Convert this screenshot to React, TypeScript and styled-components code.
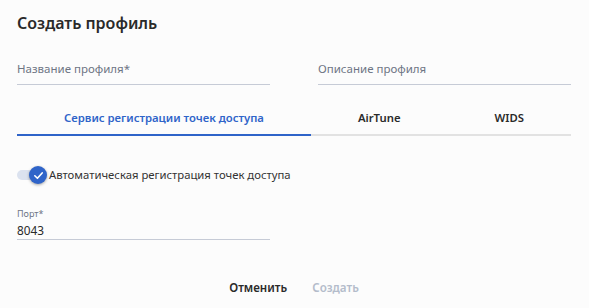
import React from 'react';
import styled, { createGlobalStyle } from 'styled-components';

const Global = createGlobalStyle`
  html, body { margin: 0; padding: 0; background: #fcfcfc; }
  body { font-family: "Noto Sans", "Open Sans", sans-serif; }
  * { box-sizing: border-box; }
`;

const Dialog = styled.div`
  width: 589px;
  height: 308px;
  padding: 11px 18px 0 17px;
  background: #fcfcfc;
`;

const Title = styled.h1`
  margin: 0;
  font-size: 16px;
  line-height: 24px;
  font-weight: 600;
  color: #2a2a2a;
`;

const FieldsRow = styled.div`
  display: grid;
  grid-template-columns: 253px 253px;
  column-gap: 48px;
  margin-top: 24px;
`;

const Field = styled.div<{ $width?: number }>`
  width: ${(p) => (p.$width ? `${p.$width}px` : 'auto')};
  border-bottom: 1px solid #c6cbd6;
`;

const Placeholder = styled.div`
  font-size: 11.5px;
  line-height: 20px;
  padding-bottom: 5px;
  color: #6e7584;
`;

const Tabs = styled.div`
  display: flex;
`;

const Tab = styled.div<{ $active?: boolean }>`
  flex: 1 1 auto;
  text-align: center;
  padding: 24px 0 7px;
  font-size: 11.3px;
  line-height: 18px;
  font-weight: 600;
  color: ${(p) => (p.$active ? '#2f64c9' : '#2a2a2a')};
  border-bottom: 2px solid ${(p) => (p.$active ? '#2f64c9' : '#e2e2e2')};
  white-space: nowrap;
`;

const ToggleRow = styled.div`
  display: flex;
  align-items: center;
  margin-top: 29px;
  height: 20px;
`;

const Switch = styled.div`
  position: relative;
  width: 30px;
  height: 20px;
  margin-right: 2px;
`;

const Track = styled.div`
  position: absolute;
  left: 0;
  top: 5px;
  width: 26px;
  height: 10px;
  border-radius: 5px;
  background: #dbe2ef;
`;

const Knob = styled.div`
  position: absolute;
  left: 12px;
  top: 1px;
  width: 18px;
  height: 18px;
  border-radius: 50%;
  background: #2f64c9;
  box-shadow: 0 1px 3px rgba(0, 0, 0, 0.35);
  display: flex;
  align-items: center;
  justify-content: center;
`;

const ToggleLabel = styled.span`
  font-size: 11.3px;
  line-height: 20px;
  color: #333;
`;

const PortField = styled(Field)`
  margin-top: 22px;
`;

const SmallLabel = styled.div`
  font-size: 9px;
  line-height: 14px;
  color: #6e7584;
`;

const Value = styled.div`
  font-size: 11.8px;
  line-height: 18px;
  color: #2a2a2a;
`;

const Actions = styled.div`
  display: flex;
  justify-content: center;
  gap: 9px;
  margin-top: 38px;
`;

const Button = styled.button<{ $disabled?: boolean }>`
  background: none;
  border: none;
  padding: 0 8px;
  font-family: inherit;
  font-size: 11.6px;
  line-height: 20px;
  font-weight: 600;
  color: ${(p) => (p.$disabled ? '#b4bccb' : '#2a2a2a')};
  cursor: ${(p) => (p.$disabled ? 'default' : 'pointer')};
`;

export default function App() {
  return (
    <>
      <Global />
      <Dialog>
        <Title>Создать профиль</Title>
        <FieldsRow>
          <Field>
            <Placeholder>Название профиля*</Placeholder>
          </Field>
          <Field>
            <Placeholder>Описание профиля</Placeholder>
          </Field>
        </FieldsRow>
        <Tabs>
          <Tab $active>Сервис регистрации точек доступа</Tab>
          <Tab>AirTune</Tab>
          <Tab>WIDS</Tab>
        </Tabs>
        <ToggleRow>
          <Switch>
            <Track />
            <Knob>
              <svg width="11" height="11" viewBox="0 0 12 12" fill="none">
                <path d="M2 6.3 L4.8 9 L10 3.2" stroke="#fff" strokeWidth="1.8" strokeLinecap="round" strokeLinejoin="round" />
              </svg>
            </Knob>
          </Switch>
          <ToggleLabel>Автоматическая регистрация точек доступа</ToggleLabel>
        </ToggleRow>
        <PortField $width={253}>
          <SmallLabel>Порт*</SmallLabel>
          <Value>8043</Value>
        </PortField>
        <Actions>
          <Button>Отменить</Button>
          <Button $disabled>Создать</Button>
        </Actions>
      </Dialog>
    </>
  );
}
